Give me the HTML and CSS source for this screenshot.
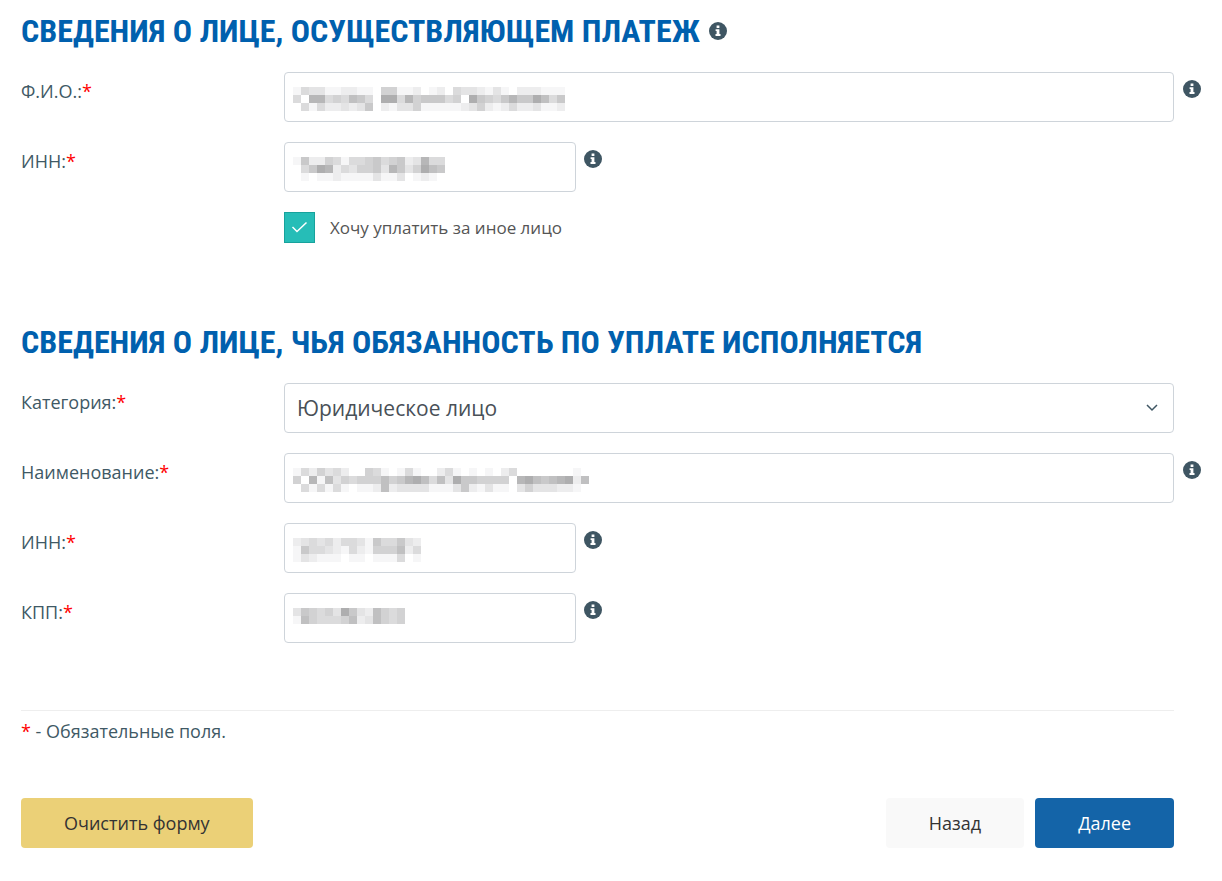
FILE: index.html
```html
<!DOCTYPE html>
<html lang="ru">
<head>
<meta charset="utf-8">
<meta name="viewport" content="width=device-width, initial-scale=1">
<title>Сведения о плательщике</title>
<link rel="stylesheet" href="styles.css">
</head>
<body>
<svg class="sprite" aria-hidden="true">
  <symbol id="info" viewBox="0 0 18 18">
    <circle cx="9" cy="9" r="9" fill="#3f5663"/>
    <path d="M7.6 3.6h2.8v2.3H7.6zM6.6 7.2h3.8v4.9h1.1v1.8h-5v-1.8h1.1V9h-1z" fill="#fff"/>
  </symbol>
</svg>
<form class="form">
  <section class="section">
    <h2 class="title">СВЕДЕНИЯ О ЛИЦЕ, ОСУЩЕСТВЛЯЮЩЕМ ПЛАТЕЖ <button class="info" type="button" aria-label="Подсказка"><svg><use href="#info"/></svg></button></h2>
    <div class="rows">
      <div class="row">
        <label class="label" for="fio">Ф.И.О.:<span class="req">*</span></label>
        <div class="control"><input class="input" id="fio" type="text"><svg class="mask" data-rows="1433112211055112012043321310222111 4088454764099485666450965468669746 0414223236021335111112352124223112"></svg></div>
        <button class="info" type="button" aria-label="Подсказка"><svg><use href="#info"/></svg></button>
      </div>
      <div class="row">
        <label class="label" for="inn1">ИНН:<span class="req">*</span></label>
        <div class="control control-short"><input class="input" id="inn1" type="text"><svg class="mask" data-rows="1622541445645623844 0469824355638635976 0101121111311301210"></svg></div>
        <button class="info" type="button" aria-label="Подсказка"><svg><use href="#info"/></svg></button>
      </div>
      <div class="row row-check">
        <input class="check" id="other" type="checkbox" checked>
        <svg class="tick" viewBox="0 0 31 31" aria-hidden="true"><path d="M8.500 15l4.500 4.500 9.500-9" fill="none" stroke="#fff" stroke-width="1.500"/></svg>
        <label class="check-label" for="other">Хочу уплатить за иное лицо</label>
      </div>
    </div>
  </section>
  <section class="section">
    <h2 class="title">СВЕДЕНИЯ О ЛИЦЕ, ЧЬЯ ОБЯЗАННОСТЬ ПО УПЛАТЕ ИСПОЛНЯЕТСЯ</h2>
    <div class="rows">
      <div class="row">
        <label class="label" for="category">Категория:<span class="req">*</span></label>
        <div class="control">
          <select class="input select" id="category"><option>Юридическое лицо</option></select>
          <svg class="chevron" viewBox="0 0 12 8" aria-hidden="true"><path d="M1 1l5 5 5-5" fill="none" stroke="#3f5663" stroke-width="1.500"/></svg>
        </div>
        <span class="info"></span>
      </div>
      <div class="row">
        <label class="label" for="name">Наименование:<span class="req">*</span></label>
        <div class="control"><input class="input" id="name" type="text"><svg class="mask" data-rows="1425342005410141002410101024000000010 5081735455575689747396655550897678927 0414141011272333311136213110353332210"></svg></div>
        <button class="info" type="button" aria-label="Подсказка"><svg><use href="#info"/></svg></button>
      </div>
      <div class="row">
        <label class="label" for="inn2">ИНН:<span class="req">*</span></label>
        <div class="control control-short"><input class="input" id="inn2" type="text"><svg class="mask" data-rows="2343424431644632 1644321421555724 1321110110111401"></svg></div>
        <button class="info" type="button" aria-label="Подсказка"><svg><use href="#info"/></svg></button>
      </div>
      <div class="row">
        <label class="label" for="kpp">КПП:<span class="req">*</span></label>
        <div class="control control-short"><input class="input" id="kpp" type="text"><svg class="mask" data-rows="36545396327545 17544457237545"></svg></div>
        <button class="info" type="button" aria-label="Подсказка"><svg><use href="#info"/></svg></button>
      </div>
    </div>
  </section>
  <footer class="footer">
    <p class="note"><span class="req">*</span> - Обязательные поля.</p>
    <div class="actions">
      <button class="btn btn-clear" type="reset">Очистить форму</button>
      <button class="btn btn-back" type="button">Назад</button>
      <button class="btn btn-next" type="submit">Далее</button>
    </div>
  </footer>
</form>
<script src="mask.js"></script>
</body>
</html>
```
FILE: styles.css
```css
* { box-sizing: border-box; }

body {
  margin: 0;
  background: #fff;
  color: #405965;
  font: 18px/26px "Open Sans", "Noto Sans", sans-serif;
}

.sprite { display: none; }

.form { padding: 11px 21px 32px; }

.section + .section { margin-top: 79px; }

.title {
  display: flex;
  align-items: center;
  gap: 9px;
  margin: 0 0 21px;
  color: #0060ae;
  font: bold 32px/40px "Roboto Condensed", "Liberation Sans Narrow", Roboto, sans-serif;
}

.rows {
  display: flex;
  flex-direction: column;
  gap: 20px;
}

.row {
  display: flex;
  align-items: flex-start;
}

.label {
  flex: 0 0 263px;
  padding-top: 6px;
}

.req { color: #f00; }

.control {
  position: relative;
  flex: 1;
  margin-right: 9px;
}

.control-short {
  max-width: 292px;
  margin-right: 8px;
}

.input {
  display: block;
  width: 100%;
  height: 50px;
  padding: 0 12px;
  border: 1px solid #ced4da;
  border-radius: 4px;
  background: #fff;
  color: #495057;
  font: 21px/30px "Open Sans", "Noto Sans", sans-serif;
}

.select { appearance: none; }

.chevron {
  position: absolute;
  top: 21px;
  right: 16px;
  width: 12px;
  height: 8px;
  pointer-events: none;
}

.mask {
  position: absolute;
  top: 15px;
  left: 9px;
  pointer-events: none;
}

.info {
  flex: 0 0 18px;
  width: 18px;
  height: 18px;
  margin-top: 8px;
  padding: 0;
  border: 0;
  background: none;
}

.info svg {
  display: block;
  width: 18px;
  height: 18px;
}

.title .info { margin-top: 0; }

.row-check {
  position: relative;
  align-items: center;
  padding-left: 263px;
}

.check {
  appearance: none;
  width: 31px;
  height: 31px;
  margin: 0 15px 0 0;
  border: 1px solid #17a29c;
  background: #26bdb7;
}

.tick {
  position: absolute;
  top: 0;
  left: 263px;
  width: 31px;
  height: 31px;
  pointer-events: none;
}

.check-label { color: #555; font-size: 17px; }

.footer {
  margin: 67px 27px 0 0;
  border-top: 1px solid #eee;
}

.note { margin: 7px 0 54px; }

.actions { display: flex; gap: 11px; }

.btn {
  height: 50px;
  padding: 0 43px;
  border: 0;
  border-radius: 4px;
  font: 18px/26px "Open Sans", "Noto Sans", sans-serif;
}

.btn-clear { margin-right: auto; background: #ebd077; color: #333; }
.btn-back { background: #f9f9f9; color: #333; }
.btn-next { background: #1464a8; color: #fff; }
```
FILE: mask.js
```js
// Draws hidden field values as a mosaic: one digit per cell, 0 = white, 9 = darkest.
document.querySelectorAll('.mask').forEach(function (svg) {
  var rows = svg.dataset.rows.split(' ');
  var size = 8;
  svg.setAttribute('width', rows[0].length * size);
  svg.setAttribute('height', rows.length * size);
  rows.forEach(function (row, y) {
    row.split('').forEach(function (level, x) {
      var v = 255 - level * 9;
      var cell = document.createElementNS('http://www.w3.org/2000/svg', 'rect');
      cell.setAttribute('x', x * size);
      cell.setAttribute('y', y * size);
      cell.setAttribute('width', size);
      cell.setAttribute('height', size);
      cell.setAttribute('fill', 'rgb(' + v + ',' + v + ',' + (v + (level > 0 ? 1 : 0)) + ')');
      svg.appendChild(cell);
    });
  });
});
```
